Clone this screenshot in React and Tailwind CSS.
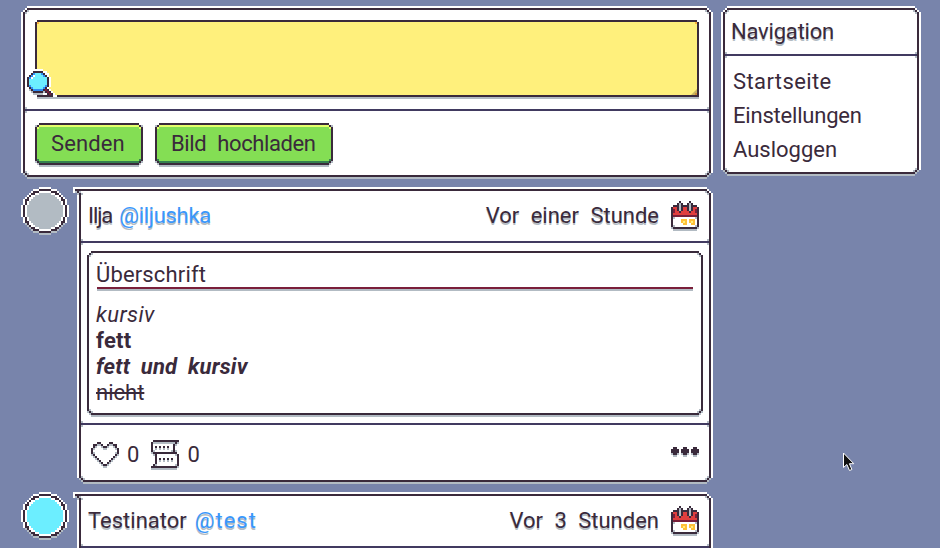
const COLORS = {
  B: "#7884ab", W: "#ffffff", D: "#3a2a3b", g: "#b2bbc3", y: "#e6ff6b", G: "#84de54",
  E: "#34804f", O: "#ffc038", Y: "#ffef7c", R: "#df3e3e", m: "#7a1f3a",
  C: "#6ceeff", b: "#2f8cf5", o: "#ffb13b",
};

// Draws pixel art from rows of colour keys, two screen pixels per cell.
function Pixels({ rows, className = "" }) {
  const w = Math.max(...rows.map((r) => r.length));
  return (
    <svg className={`shrink-0 ${className}`} width={w * 2} height={rows.length * 2} viewBox={`0 0 ${w} ${rows.length}`} shapeRendering="crispEdges">
      {rows.flatMap((r, y) =>
        [...r].map((c, x) => (COLORS[c] ? <rect key={`${x}-${y}`} x={x} y={y} width="1" height="1" fill={COLORS[c]} /> : null))
      )}
    </svg>
  );
}

const flip = (rows) => rows.map((r) => [...r].reverse().join(""));

const PANEL_TOP = ["BBBW", "BBWD", "BWDg", "WDgW"];
const PANEL_BOTTOM = ["WDgW", "BgDg", "BBgD", "BBBg"];
const TAIL = ["WWWWW", "WDDDD", "WgDgW", "BBgDg", "BBWDW"];
const BOX_TOP = ["WWD", "WDg", "DgW"];
const BOX_BOTTOM = ["DgW", "gDg", "WgD", "WWg"];
const BTN_TOP = ["WWD", "gDy", "DyG"];
const BTN_BOTTOM = ["DEG", "gDE", "WgD", "WWg"];

const CALENDAR = [
  "....D....D....", "...DgD..DgD...", ".DDDgDDDDgDDD.", "DRRDgDRRDgDRRD", "DmRDgDRRDgDRmD",
  "DmRRDRRRRDRRmD", "DRRRRRRRRRRRRD", "DmmmmmmmmmmmmD", "DgWWWWWWWWWWgD", "DWWWWOOOWOOOWD",
  "DWWWWOYOWOYOWD", "DWWWWWOOWWOOWD", "DgWWWWWWWWWWgD", "gDDDDDDDDDDDDg", ".gggggggggggg.",
];
const HEART = [
  "...DD....DD...", ".DDggD..DggDD.", ".Dg..gDDg..gD.", "Dg....gg....gD", "D............D",
  "Dg..........gD", "gD..........Dg", ".gD........Dg.", "..gD......Dg..", "...gD....Dg...",
  "....gD..Dg....", ".....gDDg.....", "......gg......",
];
const SCROLL = [
  ".DDDDDDDDDDDDD", "DgggggggggggDg", "D..........Dg.", "D.D.D.D.D..D..", "D.g.g.g.g..D..",
  "Dg........gDg.", "gDDDDDDDDDDDD.", ".gD.........gD", "..D..........D", "..D.D.D.D.D..D",
  "..D.g.g.g.g..D", "..D..........D", ".Dg.........gD", "DDDDDDDDDDDDDg", "ggggggggggggg.",
];
const DOTS = [".DD...DD...DD.", "DDDD.DDDD.DDDD", "DDDD.DDDD.DDDD", "gDDg.gDDg.gDDg", ".gg...gg...gg."];
const LENS = [
  "...WWWWW", "..WDDDDDWW", ".WDbCCCbDWW", ".DbWCCCCbDW", "DbWCCCCCCCDW", "DCCCCCCCCCDW", "DCCCCCCCCCDW",
  "DCCCCCCCCCDW", "DbCCCCCCCbDW", ".DbCCCCCbDW", ".gDbbbbbDmDW", "..gDDDDDgDmDW", "...gggggWWDmDW", "...........DDWW",
  "............g",
];

const OUTER = { tl: "-left-1 -top-1", tr: "-right-1 -top-1", bl: "-left-1 -bottom-1", br: "-right-1 -bottom-1" };
const INNER = { tl: "-left-0.5 -top-0.5", tr: "-right-0.5 -top-0.5", bl: "-left-0.5 -bottom-1", br: "-right-0.5 -bottom-1" };

function Corners({ top, topLeft, bottom, at }) {
  return (
    <>
      <Pixels rows={topLeft || top} className={`absolute ${topLeft ? "-left-2 -top-1" : at.tl}`} />
      <Pixels rows={flip(top)} className={`absolute ${at.tr}`} />
      <Pixels rows={bottom} className={`absolute ${at.bl}`} />
      <Pixels rows={flip(bottom)} className={`absolute ${at.br}`} />
    </>
  );
}

function Panel({ className = "", tail = false, children }) {
  return (
    <div className={`relative flex flex-col border-2 border-[#3a2a3b] bg-white shadow-[-2px_0_0_#fff,2px_0_0_#fff,0_-2px_0_#fff,0_2px_0_#b2bbc3] ${className}`}>
      {children}
      <Corners top={PANEL_TOP} topLeft={tail ? TAIL : undefined} bottom={PANEL_BOTTOM} at={OUTER} />
    </div>
  );
}

function Divider() {
  return (
    <div className="relative h-0.5 shrink-0 bg-[#413a60]">
      <Pixels rows={["g", ".", "g"]} className="absolute -top-0.5 left-0" />
      <Pixels rows={["g", ".", "g"]} className="absolute -top-0.5 right-0" />
    </div>
  );
}

function Button({ className, children }) {
  return (
    <button className={`relative flex h-[42px] items-center border-2 border-[#3a2a3b] bg-[#84de54] pl-3.5 whitespace-nowrap shadow-[0_2px_0_#b2bbc3,inset_0_2px_0_#e6ff6b,inset_0_-2px_0_#34804f] ${className}`}>
      {children}
      <Corners top={BTN_TOP} bottom={BTN_BOTTOM} at={INNER} />
    </button>
  );
}

function Avatar({ fill }) {
  const cells = [];
  for (let y = 0; y < 24; y++)
    for (let x = 0; x < 24; x++) {
      const d = Math.hypot(x - 11.5, y - 11.5);
      if (d > 12) continue;
      const c = d > 11 ? (y > 17 ? COLORS.g : COLORS.W) : d > 10 ? COLORS.D : d > 9.1 ? COLORS.W : fill;
      cells.push(<rect key={`${x}-${y}`} x={x} y={y} width="1" height="1" fill={c} />);
    }
  return (
    <svg className="-mt-0.5 shrink-0" width="48" height="48" viewBox="0 0 24 24" shapeRendering="crispEdges">
      {cells}
    </svg>
  );
}

const SHADOW = "[text-shadow:0_2px_0_#b2bbc3]";

function PostHeader({ name, nameClass = "", handle, handleClass = "", time }) {
  return (
    <div className="flex h-[50px] shrink-0 items-center pr-2.5 pl-[7px] whitespace-nowrap">
      <span className={`${SHADOW} ${nameClass}`}>{name}</span>
      <span className={`text-[#3a97fb] ${SHADOW} ${handleClass}`}>{handle}</span>
      <span className={`mr-3 ml-auto [word-spacing:6px] ${SHADOW}`}>{time}</span>
      <Pixels rows={CALENDAR} />
    </div>
  );
}

export default function App() {
  return (
    <div className="relative flex h-[548px] w-[940px] gap-3 overflow-hidden bg-[#7884ab] pt-2 pl-[21px] font-['Roboto','Liberation_Sans',sans-serif] text-[22px] leading-6 text-[#3a2a3b]">
      <div className="flex w-[690px] flex-col gap-3">
        <Panel className="ml-0.5 h-[169px] shrink-0">
          <div className="h-[99px] p-2.5">
            <div className="relative h-[77px] border-2 border-[#3a2a3b] bg-[#fff07c] shadow-[0_2px_0_#b2bbc3]">
              <Pixels rows={["W.", ".o"]} className="absolute -top-0.5 -left-0.5" />
              <Pixels rows={[".W", "o."]} className="absolute -top-0.5 -right-0.5" />
              <Pixels rows={["W", "W"]} className="absolute -bottom-1 -left-0.5" />
              <svg className="absolute right-0 bottom-0" width="6" height="6">
                <path d="M6 0V6H0z" fill="#c9b662" />
                <path d="M4 4h2v2h-2z" fill="#c98c3a" />
              </svg>
              <Pixels rows={LENS} className="absolute top-[47px] -left-2.5" />
            </div>
          </div>
          <Divider />
          <div className="flex gap-3 px-2.5 pt-3">
            <Button className="w-[108px]"><span className="tracking-[0.1px]">Senden</span></Button>
            <Button className="w-[178px]"><span className="tracking-[-0.4px] [word-spacing:6px]">Bild hochladen</span></Button>
          </div>
        </Panel>

        <div className="flex shrink-0 gap-2.5">
          <Avatar fill="#b2bbc3" />
          <Panel tail className="h-[293px] w-[632px]">
            <PostHeader name="Ilja" nameClass="tracking-[-1.1px]" handle="@iljushka" handleClass="ml-[7px] tracking-[-0.3px]" time="Vor einer Stunde" />
            <Divider />
            <div className="h-[180px] px-1.5 pt-2">
              <div className="relative h-[164px] border-2 border-[#3a2a3b] px-2 shadow-[0_2px_0_#b2bbc3]">
                <h1 className="-ml-px h-[34px] pt-2.5 tracking-[0.15px]">Überschrift</h1>
                <div className="h-0.5 bg-[#7a1f3a] shadow-[0_2px_0_#b2bbc3]" />
                <div className="-ml-px pt-[13px] leading-[26px]">
                  <p className="tracking-[0.4px] italic">kursiv</p>
                  <p className="font-bold tracking-[0.3px]">fett</p>
                  <p className="font-bold tracking-[0.2px] italic [word-spacing:5px]">fett und kursiv</p>
                  <p><s>nicht</s></p>
                </div>
                <Corners top={BOX_TOP} bottom={BOX_BOTTOM} at={INNER} />
              </div>
            </div>
            <Divider />
            <div className="flex h-[55px] items-center pt-[5px] pr-2.5 pl-2.5">
              <Pixels rows={HEART} />
              <span className="ml-2">0</span>
              <Pixels rows={SCROLL} className="ml-3" />
              <span className="ml-2">0</span>
              <Pixels rows={DOTS} className="mb-1.5 ml-auto" />
            </div>
          </Panel>
        </div>

        <div className="flex shrink-0 gap-2.5">
          <Avatar fill="#6ceeff" />
          <Panel tail className="h-[293px] w-[632px]">
            <PostHeader name="Testinator" handle="@test" handleClass="ml-2 tracking-[1px]" time="Vor 3 Stunden" />
            <Divider />
          </Panel>
        </div>
      </div>

      <Panel className="h-[166px] w-[196px]">
        <h2 className={`flex h-11 items-center pl-1.5 tracking-[-0.2px] ${SHADOW}`}>Navigation</h2>
        <Divider />
        <nav className="flex flex-col items-start pt-[9px] pl-2 leading-[34px]">
          <a className="tracking-[0.4px]">Startseite</a>
          <a className="tracking-[-0.2px]">Einstellungen</a>
          <a>Ausloggen</a>
        </nav>
      </Panel>

      <svg className="absolute top-[452px] left-[842px]" width="14" height="20" viewBox="0 0 14 20">
        <path d="M1.5 1v14.5l3.4-3 2.6 6 2.4-1-2.5-5.8h4.4z" fill="#111" stroke="#fff" />
      </svg>
    </div>
  );
}
